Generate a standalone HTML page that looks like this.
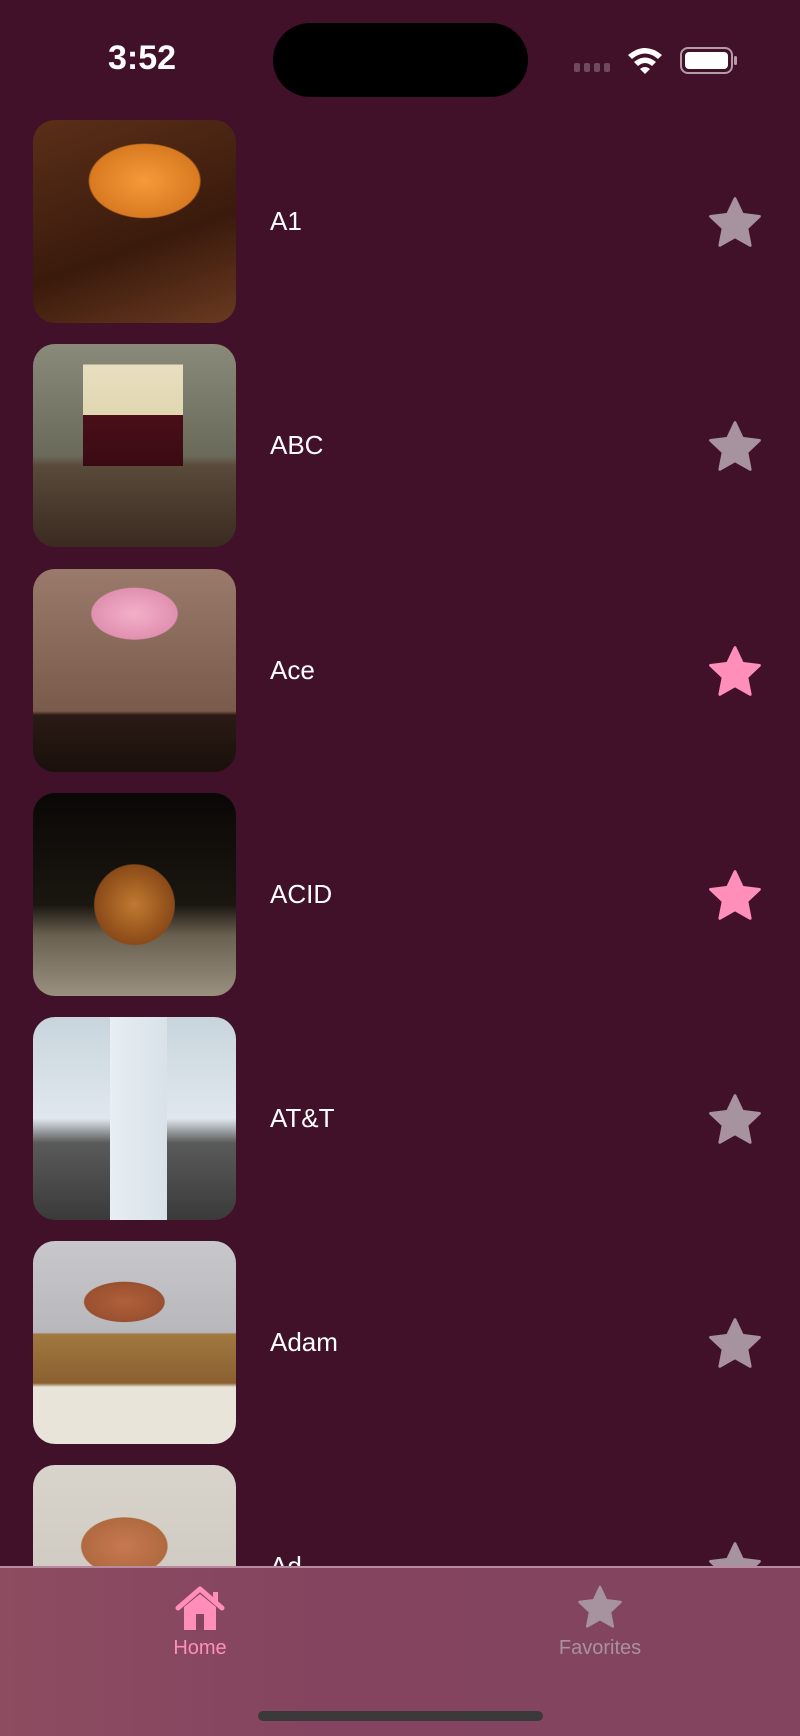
<!DOCTYPE html>
<html><head><meta charset="utf-8"><style>
*{margin:0;padding:0;box-sizing:border-box}
body{width:800px;height:1736px;background:#41112a;overflow:hidden;position:relative;font-family:"Liberation Sans",sans-serif}
.time{position:absolute;left:108px;top:39px;font-size:34px;font-weight:bold;color:#fff}
.island{position:absolute;left:273px;top:23px;width:255px;height:74px;background:#000;border-radius:37px}
.row{position:absolute;left:0;width:800px;height:203px}
.img{position:absolute;left:33px;top:0;width:203px;height:203px;border-radius:22px;overflow:hidden}
.name{position:absolute;left:270px;top:86px;font-size:26px;color:#fff}
.star{position:absolute;left:706px;top:75px;width:58px;height:57px}
.tab{position:absolute;left:0;top:1566px;width:800px;height:170px;background:linear-gradient(90deg,#8d4c60,#84445f 40%,#82445f);border-top:2px solid #b78aa0}
</style></head><body>
<div class="time">3:52</div>
<div class="island"></div>
<svg style="position:absolute;left:573px;top:45px" width="165" height="32" viewBox="0 0 165 32">
<g fill="#6e4a5c"><rect x="1" y="18" width="6" height="9" rx="2"/><rect x="11" y="18" width="6" height="9" rx="2"/><rect x="21" y="18" width="6" height="9" rx="2"/><rect x="31" y="18" width="6" height="9" rx="2"/></g>
<path d="M55 10 Q72 -4 89 10 L85 14 Q72 3 59 14Z M61 17 Q72 8 83 17 L79 21 Q72 15 65 21Z M67 24 Q72 20 77 24 L72 29Z" fill="#fff"/>
<rect x="108" y="3" width="51" height="25" rx="7" fill="none" stroke="#b59aa8" stroke-width="2"/>
<rect x="112" y="7" width="43" height="17" rx="4" fill="#fff"/>
<rect x="161" y="11" width="3" height="9" rx="1.5" fill="#b59aa8"/>
</svg>

<div class="row" style="top:120px"><div class="img" style="background:radial-gradient(ellipse 45% 30% at 55% 30%,#f59a3a,#d97a20 60%,transparent 62%),linear-gradient(160deg,#5a2f18,#3a1a0c 60%,#6a3a20)"></div><div class="name">A1</div><svg class="star" viewBox="0 0 24 24"><path d="M12 1.5l3.1 6.6 7.2.9-5.3 5 1.4 7.2L12 17.6l-6.4 3.6 1.4-7.2-5.3-5 7.2-.9z" fill="#a7939f" stroke="#a7939f" stroke-linejoin="round" stroke-width="1.2"/></svg></div>

<div class="row" style="top:344px"><div class="img" style="background:linear-gradient(180deg,transparent 10%,#e8dfc0 10%,#e0d6b0 35%,#4a0f18 35%,#3a0a14 60%,transparent 60%) 50px 0/100px 100% no-repeat,linear-gradient(180deg,#8a8a7a,#6a6a5a 55%,#5a4a3a 60%,#3a2a20)"></div><div class="name">ABC</div><svg class="star" viewBox="0 0 24 24"><path d="M12 1.5l3.1 6.6 7.2.9-5.3 5 1.4 7.2L12 17.6l-6.4 3.6 1.4-7.2-5.3-5 7.2-.9z" fill="#a7939f" stroke="#a7939f" stroke-linejoin="round" stroke-width="1.2"/></svg></div>

<div class="row" style="top:569px"><div class="img" style="background:radial-gradient(ellipse 30% 18% at 50% 22%,#f4b0c8,#e090b0 70%,transparent 72%),linear-gradient(180deg,#9a7a6a,#7a5a4a 70%,#2a1a14 72%,#1a100c)"></div><div class="name">Ace</div><svg class="star" viewBox="0 0 24 24"><path d="M12 1.5l3.1 6.6 7.2.9-5.3 5 1.4 7.2L12 17.6l-6.4 3.6 1.4-7.2-5.3-5 7.2-.9z" fill="#ff8fb8" stroke="#ff8fb8" stroke-linejoin="round" stroke-width="1.2"/></svg></div>

<div class="row" style="top:793px"><div class="img" style="background:radial-gradient(ellipse 28% 28% at 50% 55%,#c07a30,#8a4a18 70%,transparent 72%),linear-gradient(180deg,#0a0806,#1a1610 55%,#6a6050 70%,#9a9080)"></div><div class="name">ACID</div><svg class="star" viewBox="0 0 24 24"><path d="M12 1.5l3.1 6.6 7.2.9-5.3 5 1.4 7.2L12 17.6l-6.4 3.6 1.4-7.2-5.3-5 7.2-.9z" fill="#ff8fb8" stroke="#ff8fb8" stroke-linejoin="round" stroke-width="1.2"/></svg></div>

<div class="row" style="top:1017px"><div class="img" style="background:linear-gradient(90deg,transparent 38%,#e8eef2 38%,#d8e2e8 66%,transparent 66%),linear-gradient(180deg,#c8d4dc,#e0e8ee 50%,#5a5a5a 62%,#3a3a3a)"></div><div class="name">AT&amp;T</div><svg class="star" viewBox="0 0 24 24"><path d="M12 1.5l3.1 6.6 7.2.9-5.3 5 1.4 7.2L12 17.6l-6.4 3.6 1.4-7.2-5.3-5 7.2-.9z" fill="#a7939f" stroke="#a7939f" stroke-linejoin="round" stroke-width="1.2"/></svg></div>

<div class="row" style="top:1241px"><div class="img" style="background:radial-gradient(ellipse 28% 14% at 45% 30%,#b0603a,#9a5030 70%,transparent 72%),linear-gradient(180deg,#c8c8cc,#b8b8bc 45%,#a07840 46%,#8a6030 70%,#e8e4da 72%)"></div><div class="name">Adam</div><svg class="star" viewBox="0 0 24 24"><path d="M12 1.5l3.1 6.6 7.2.9-5.3 5 1.4 7.2L12 17.6l-6.4 3.6 1.4-7.2-5.3-5 7.2-.9z" fill="#a7939f" stroke="#a7939f" stroke-linejoin="round" stroke-width="1.2"/></svg></div>

<div class="row" style="top:1465px"><div class="img" style="background:radial-gradient(ellipse 30% 20% at 45% 40%,#c87850,#b06a40 70%,transparent 72%),linear-gradient(180deg,#d8d4cc,#c8c4bc)"></div><div class="name">Ad</div><svg class="star" viewBox="0 0 24 24"><path d="M12 1.5l3.1 6.6 7.2.9-5.3 5 1.4 7.2L12 17.6l-6.4 3.6 1.4-7.2-5.3-5 7.2-.9z" fill="#a7939f" stroke="#a7939f" stroke-linejoin="round" stroke-width="1.2"/></svg></div>

<div class="tab">
<svg style="position:absolute;left:175px;top:18px" width="50" height="46" viewBox="0 0 50 46"><path d="M3 22 L25 3 L47 22" fill="none" stroke="#ff8fb8" stroke-width="5" stroke-linejoin="round" stroke-linecap="round"/><rect x="38" y="6" width="5" height="10" fill="#ff8fb8"/><path d="M9 21 L25 8 L41 21 V44 H9Z" fill="#ff8fb8"/><rect x="21" y="28" width="8" height="16" fill="#84445f"/></svg>
<div style="position:absolute;left:150px;top:69px;width:100px;text-align:center;color:#ff8fb8;font-size:20px">Home</div>
<svg style="position:absolute;left:575px;top:16px" width="50" height="48" viewBox="0 0 24 24"><path d="M12 1.5l3.1 6.6 7.2.9-5.3 5 1.4 7.2L12 17.6l-6.4 3.6 1.4-7.2-5.3-5 7.2-.9z" fill="#a7939f" stroke="#a7939f" stroke-linejoin="round" stroke-width="1.2"/></svg>
<div style="position:absolute;left:530px;top:69px;width:140px;text-align:center;color:#a7939f;font-size:20px">Favorites</div>
<div style="position:absolute;left:258px;top:143px;width:285px;height:10px;border-radius:5px;background:#3a3a3a"></div>
</div>
</body></html>
